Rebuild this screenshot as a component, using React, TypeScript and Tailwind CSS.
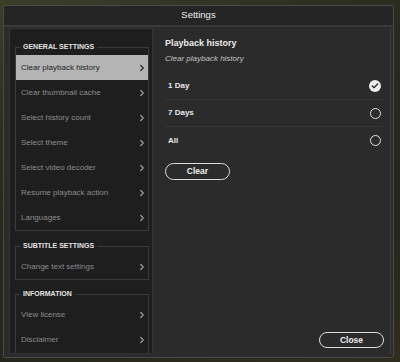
import { ChevronRight, Check } from "lucide-react";

const general = [
  "Clear playback history",
  "Clear thumbnail cache",
  "Select history count",
  "Select theme",
  "Select video decoder",
  "Resume playback action",
  "Languages",
];

function Row({ label, active }: { label: string; active?: boolean }) {
  return (
    <div
      className={`h-[25px] flex items-center justify-between pl-[5px] pr-[1px] text-[8px] ${
        active ? "bg-[#b4b4b4] text-[#222222]" : "text-[#8c8c8c]"
      }`}
    >
      <span>{label}</span>
      <ChevronRight size={10} strokeWidth={3} className={active ? "text-[#2a2a2a]" : "text-[#9a9a9a]"} />
    </div>
  );
}

function Group({ title, items, className = "", selected }: { title: string; items: string[]; className?: string; selected?: string }) {
  return (
    <fieldset className={`w-[134px] border border-[#3b3b3b] pb-0 pt-[3px] ${className}`}>
      <legend className="ml-[4px] px-[3px] text-[7px] leading-[10px] font-bold text-[#e4e4e4]">
        {title}
      </legend>
      {items.map((it) => (
        <Row key={it} label={it} active={it === selected} />
      ))}
    </fieldset>
  );
}

function Radio({ checked }: { checked?: boolean }) {
  if (checked) {
    return (
      <div className="w-[12px] h-[12px] rounded-full bg-[#ececec] flex items-center justify-center">
        <Check size={8} strokeWidth={4} className="text-[#2b2b2b]" />
      </div>
    );
  }
  return <div className="w-[11px] h-[11px] rounded-full border-[1.5px] border-[#e2e2e2]" />;
}

export default function App() {
  const options = [
    { label: "1 Day", checked: true },
    { label: "7 Days" },
    { label: "All" },
  ];

  return (
    <div
      className="w-[400px] h-[362px] overflow-hidden pt-[5px] pl-[3px] bg-[linear-gradient(160deg,#3a3f2a_0%,#2b2b20_30%,#25261c_70%,#2f2d1f_100%)]"
      style={{ fontFamily: '"Liberation Sans", Arial, sans-serif' }}
    >
      <div className="w-[391px] h-[353px] flex flex-col border border-[#4a4a4a] rounded-[2px] bg-[#2b2b2b]">
        {/* title */}
        <div className="h-[21px] shrink-0 flex items-center justify-center bg-[#252525] border-b-2 border-[#3a3a3a] text-[9.5px] text-[#ececec]">
          Settings
        </div>

        <div className="flex-1 flex pl-[5px] pr-[2px] pt-[1px] pb-[3px] min-h-0">
          {/* left */}
          <div className="w-[144px] shrink-0 bg-[#1e1e1e] border border-[#343434] overflow-hidden pl-[5px]">
            <Group title="GENERAL SETTINGS" items={general} selected="Clear playback history" className="mt-[13px]" />
            <Group title="SUBTITLE SETTINGS" items={["Change text settings"]} className="mt-[10px]" />
            <Group title="INFORMATION" items={["View license", "Disclaimer"]} className="mt-[9px] pb-[10px]" />
          </div>

          {/* right */}
          <div className="flex-1 flex flex-col border-r border-[#3c3c3c] pl-[12px] pr-[6px] pt-[9px] pb-[6px]">
            <div className="text-[9px] leading-[12px] font-bold text-[#ececec]">Playback history</div>
            <div className="mt-[4px] text-[8px] leading-[12px] italic text-[#c4c4c4]">Clear playback history</div>

            <div className="mt-[8px] w-[217px]">
              {options.map((o, i) => (
                <div
                  key={o.label}
                  className={`h-[27px] flex items-center justify-between pl-[3px] pr-[1px] ${
                    i < options.length - 1 ? "border-b border-[#353535]" : ""
                  }`}
                >
                  <span className="text-[8px] font-bold text-[#e8e8e8]">{o.label}</span>
                  <Radio checked={o.checked} />
                </div>
              ))}
            </div>

            <button
              type="button"
              className="mt-[9px] w-[65px] h-[17px] rounded-full border-[1.5px] border-[#dcdcdc] text-[8.5px] font-bold text-[#ececec] flex items-center justify-center"
            >
              Clear
            </button>

            <button
              type="button"
              className="mt-auto self-end w-[65px] h-[16px] rounded-full border-[1.5px] border-[#dcdcdc] text-[8.5px] font-bold text-[#ececec] flex items-center justify-center"
            >
              Close
            </button>
          </div>
        </div>
      </div>
    </div>
  );
}
